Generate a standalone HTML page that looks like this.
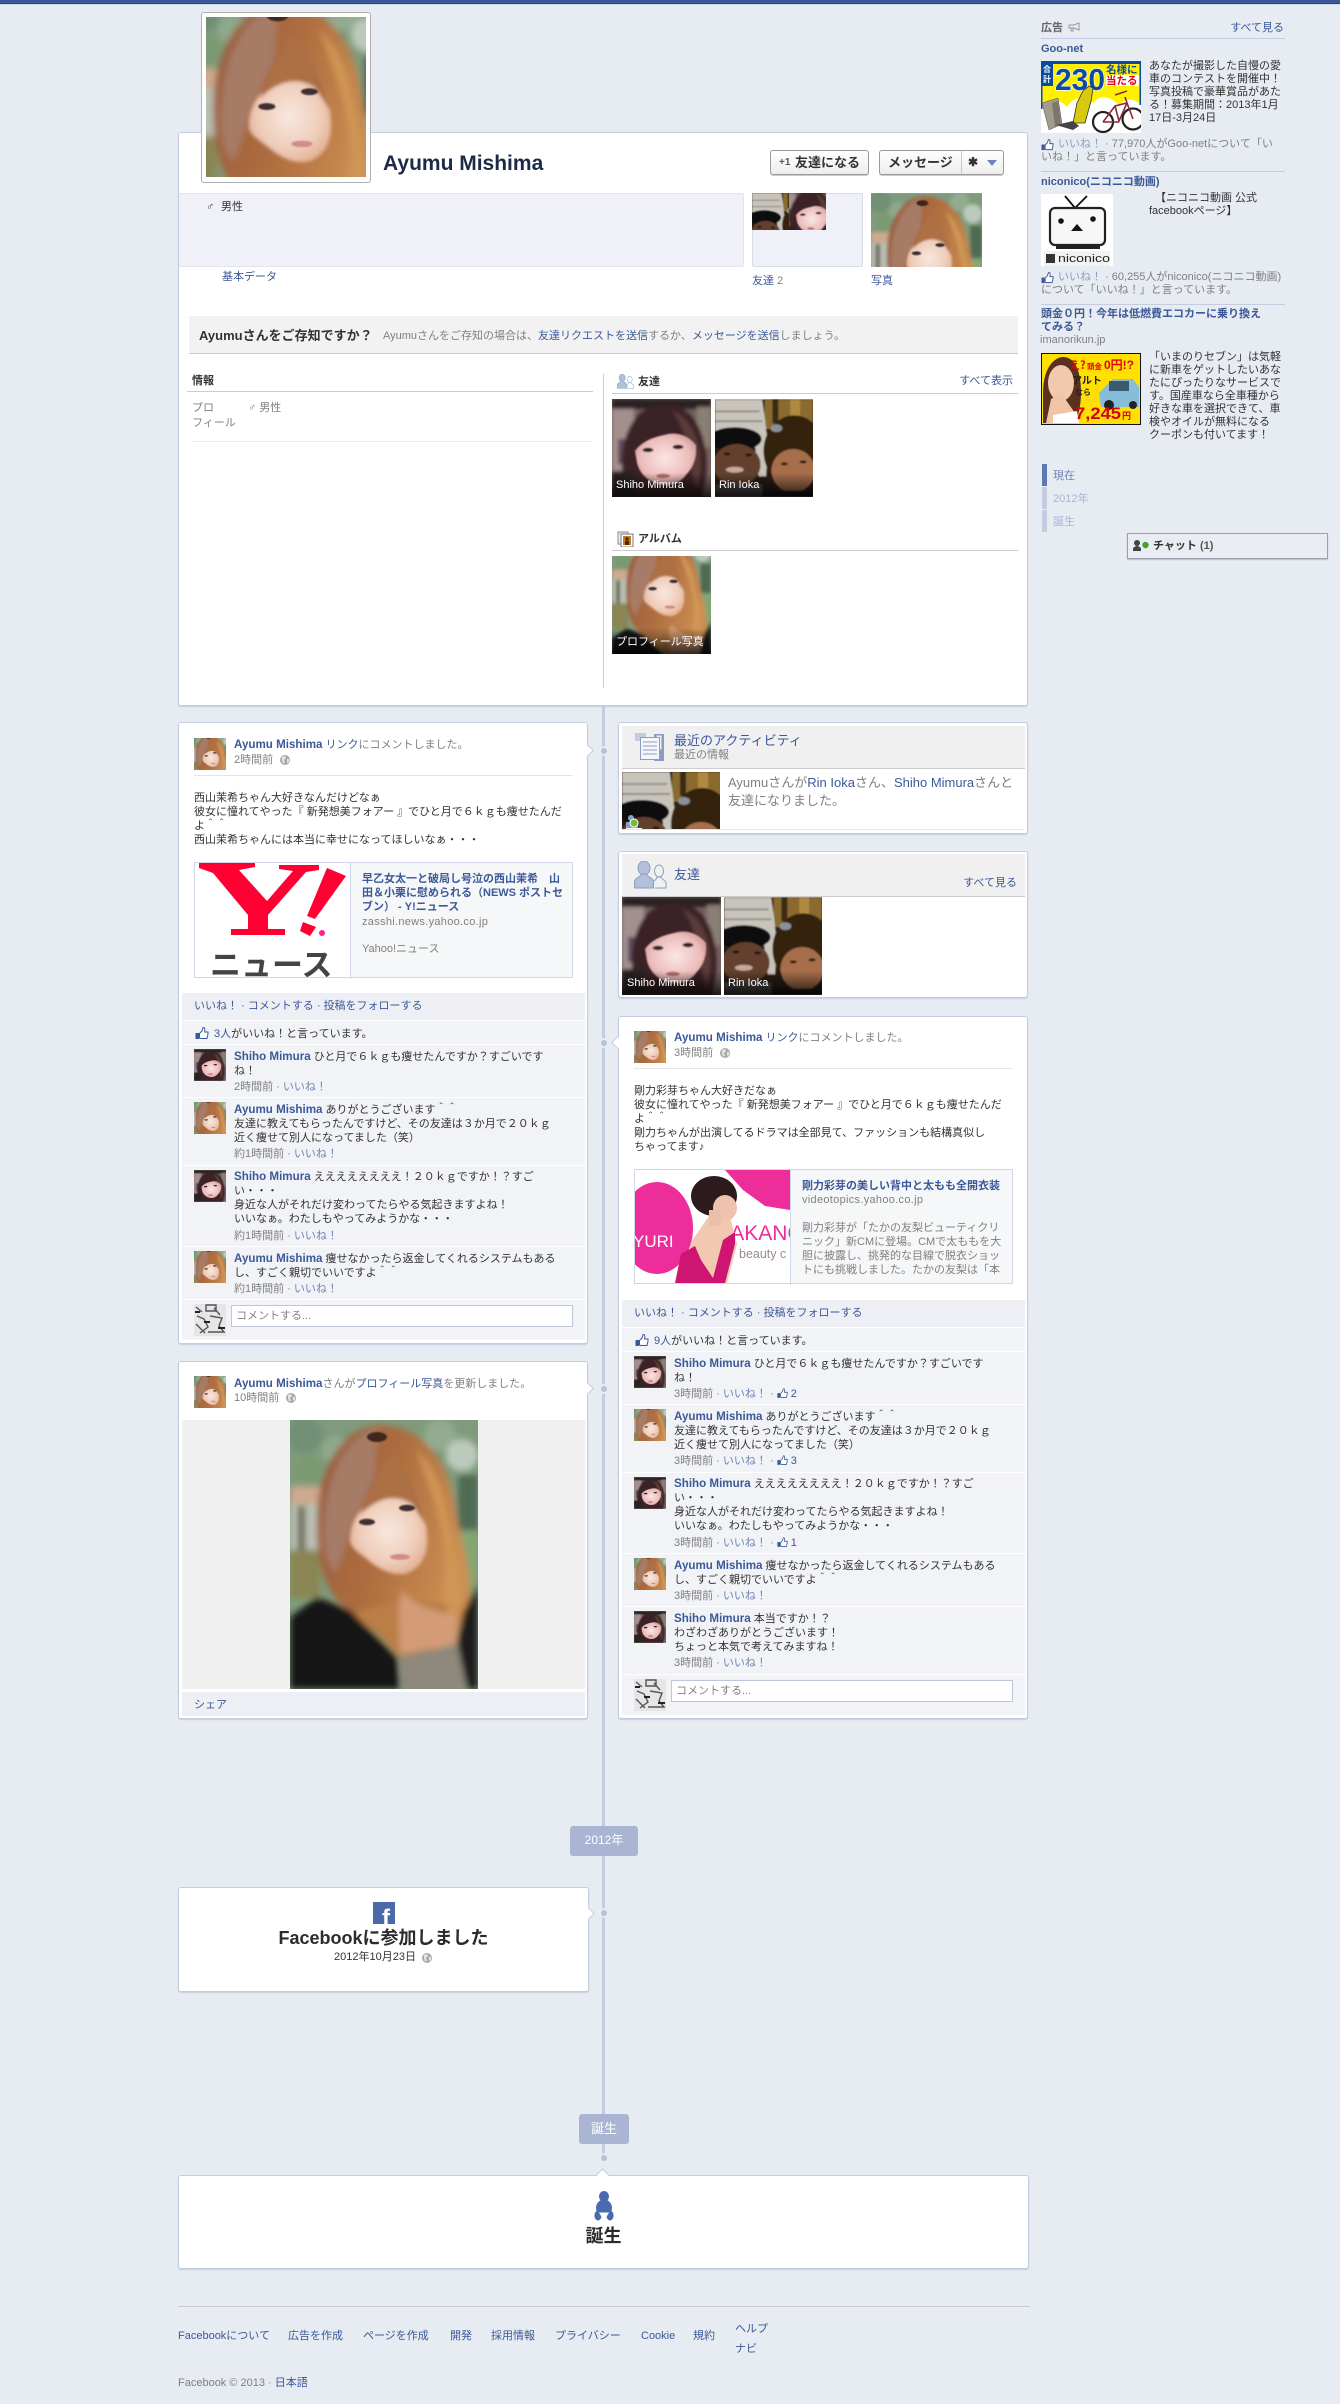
<!DOCTYPE html>
<html lang="ja"><head><meta charset="utf-8"><title>Ayumu Mishima</title>
<style>
html,body{margin:0;padding:0}
body{width:1340px;height:2404px;position:relative;overflow:hidden;background:#e7ebf2;font:11px/14px "Liberation Sans","Noto Sans CJK JP",sans-serif;color:#333}
a{color:#3b5998;text-decoration:none}
.t{position:absolute;white-space:nowrap;line-height:14px}
.g{color:#808080}
.n{font-weight:bold;font-size:11.6px;color:#3b5998}
.b{font-weight:bold}
.x{position:absolute;box-sizing:border-box}
.card{position:absolute;box-sizing:border-box;background:#fff;border:1px solid #c4cde0;border-radius:3px;box-shadow:0 1px 1px #c4cde0}
.r{position:absolute;left:182px;width:403px;background:#f1f3f7}
.rr{left:622px}
svg{position:absolute;display:block;overflow:hidden}
.av{width:32px;height:32px}
.arr{position:absolute;width:9px;height:9px;background:#fff;border:1px solid #c4cde0;transform:rotate(45deg);box-sizing:border-box}
.dot{position:absolute;left:601px;width:6px;height:6px;border-radius:3px;background:#b6c2dc;box-shadow:0 0 0 2px #e7ebf2}
.cap{position:absolute;background:linear-gradient(rgba(0,0,0,0),rgba(0,0,0,.75))}
.w{color:#fff}
.btn{position:absolute;box-sizing:border-box;height:25px;border:1px solid #9a9a9a;border-radius:3px;background:linear-gradient(#fff,#eee);box-shadow:0 1px 0 #ccc;font:bold 13px/23px "Liberation Sans","Noto Sans CJK JP",sans-serif;color:#333}
.inp{position:absolute;box-sizing:border-box;height:22px;background:#fff;border:1px solid #bdc7d8;color:#808080;padding-left:4px;line-height:20px;font-size:11px}
.hr{position:absolute;height:1px}
</style></head><body>

<svg width="0" height="0" style="position:absolute">
<defs>
<filter id="bl" x="-5%" y="-5%" width="110%" height="110%"><feGaussianBlur stdDeviation="3.2"/></filter>
<filter id="bm" x="-5%" y="-5%" width="110%" height="110%"><feGaussianBlur stdDeviation="1.8"/></filter>
<filter id="bs" x="-5%" y="-5%" width="110%" height="110%"><feGaussianBlur stdDeviation=".8"/></filter>
<linearGradient id="hg" x1="0" y1="0" x2="1" y2=".4"><stop offset="0" stop-color="#96583a"/><stop offset=".55" stop-color="#b06f40"/><stop offset="1" stop-color="#cc8e52"/></linearGradient>
<radialGradient id="fg" cx=".5" cy=".48" r=".62"><stop offset="0" stop-color="#f8e8df"/><stop offset=".6" stop-color="#efcdba"/><stop offset="1" stop-color="#dea888"/></radialGradient>
<radialGradient id="sg" cx=".5" cy=".48" r=".62"><stop offset="0" stop-color="#fae6e6"/><stop offset=".65" stop-color="#ecbdbb"/><stop offset="1" stop-color="#c58d90"/></radialGradient>
<g id="a"><rect width="188" height="269" fill="#7f9b7c"/>
<g filter="url(#bl)">
<circle cx="15" cy="15" r="18" fill="#6f9074"/><circle cx="45" cy="30" r="14" fill="#8fa98c"/><circle cx="20" cy="50" r="14" fill="#7a9a72"/>
<circle cx="150" cy="15" r="16" fill="#93ab8f"/><circle cx="172" cy="35" r="16" fill="#bccabb"/><circle cx="140" cy="40" r="10" fill="#6f8d6c"/>
<rect x="168" y="55" width="20" height="55" fill="#4f6b52"/>
<rect x="160" y="112" width="28" height="70" fill="#85a672"/>
<rect x="0" y="66" width="30" height="18" fill="#cda98e"/>
<rect x="0" y="84" width="30" height="46" fill="#b9c0b2"/>
<rect x="8" y="86" width="7" height="44" fill="#5e5c4e"/>
<rect x="0" y="130" width="30" height="48" fill="#8a8552"/>
<path d="M27 110C25 42 58 5 90 5c40 0 68 34 74 76 5 38 20 68 15 104-5 30-30 50-54 55-16-6-30-26-50-40C50 188 28 170 27 110Z" fill="url(#hg)"/>
<path d="M35 90C40 45 62 12 88 8l-4 50-22 50-16 46C32 140 32 115 35 90Z" fill="#a67c66"/>
<path d="M126 30c18 16 28 40 32 70 5 28 14 55 12 82-2 14-12 26-22 34l8-66c0-40-16-84-30-120Z" fill="#d09655"/>
<path d="M60 196c18 8 36 24 50 42l26-3c14-10 20-30 22-50-26-8-66-4-98 11Z" fill="#bb7e46"/>
<path d="M0 197 27 177 60 190 107 237 110 269H0Z" fill="#151515"/>
<path d="M188 163V269H177L167 223 173 193Z" fill="#1a1a1a"/>
<path d="M113 170c8 14 26 20 54 26v28l-57 10c0-25-4-50 3-64Z" fill="#d39c76"/>
<path d="M110 236 167 225 177 269H112Z" fill="#8f887c"/>
</g>
<g filter="url(#bm)">
<path d="M60 120C60 100 72 82 97 72c21-4 33 4 39 33 4 25-1 40-18 48-14 4-28-3-40-13C68 132 60 128 60 120Z" fill="url(#fg)"/>
<path d="M70 95C80 70 92 50 100 35c16 15 28 40 36 70L122 84C104 72 84 80 70 95Z" fill="#ac7045"/>
</g>
<g filter="url(#bs)">
<ellipse cx="87" cy="17" rx="10" ry="5" fill="#40281f"/>
<ellipse cx="77" cy="102" rx="8" ry="3.2" fill="#3f2f30"/>
<ellipse cx="117" cy="88" rx="8" ry="3.2" fill="#3f2f30"/>
<ellipse cx="110" cy="137" rx="10" ry="3" fill="#d08c8c"/>
</g></g>
<g id="s"><rect width="99" height="98" fill="#74625f"/>
<g filter="url(#bm)">
<rect width="99" height="10" fill="#2a2322"/>
<rect x="0" y="10" width="22" height="62" fill="#a3908e"/>
<rect x="6" y="40" width="10" height="25" fill="#5d4a58"/>
<rect x="85" y="8" width="14" height="40" fill="#8a7f74"/>
<path d="M12 90C5 50 15 8 50 6c30-2 42 25 44 50 2 20-2 30-4 42H20Z" fill="#3a2228"/>
<path d="M60 12c15 4 24 20 28 40 2 16 0 28-3 40L76 60C74 40 70 24 60 12Z" fill="#5a3a38"/>
<rect x="0" y="72" width="22" height="26" fill="#2a2323"/>
</g>
<g filter="url(#bs)">
<path d="M23 52C30 42 42 38 52 36c12-4 24 0 32 10 1 12-2 22-10 30-6 8-14 11-24 10-12-2-22-10-25-22Z" fill="url(#sg)"/>
<ellipse cx="36" cy="51" rx="5.500" ry="2.200" fill="#332428"/>
<ellipse cx="66" cy="48" rx="5.500" ry="2.200" fill="#332428"/>
<ellipse cx="51" cy="77" rx="7" ry="2.200" fill="#b56a6a"/>
</g></g>
<g id="r"><rect width="99" height="98" fill="#2a1c14"/>
<g filter="url(#bs)">
<rect x="50" width="49" height="30" fill="#8a6a2e"/>
<rect x="58" width="6" height="24" fill="#3a2a18"/>
<rect x="76" width="10" height="26" fill="#b08a40"/>
<path d="M0 0H48L53 40 52 78H44L40 45H0Z" fill="#c8c4bc"/>
<path d="M0 12H45M0 22H48" stroke="#95918a" stroke-width="2"/>
<ellipse cx="20" cy="40" rx="27" ry="12" fill="#0e0c0e"/>
<ellipse cx="22" cy="66" rx="24" ry="21" fill="#64402f"/>
<ellipse cx="12" cy="55" rx="3.500" ry="1.500" fill="#1a1210"/><ellipse cx="34" cy="56" rx="3.500" ry="1.500" fill="#1a1210"/>
<ellipse cx="20" cy="71" rx="9" ry="3" fill="#c8a69a"/>
<ellipse cx="80" cy="52" rx="31" ry="36" fill="#36210f"/>
<ellipse cx="79" cy="72" rx="22" ry="22" fill="#a66e4c"/>
<ellipse cx="70" cy="65" rx="3.500" ry="1.500" fill="#2a1a10"/><ellipse cx="89" cy="63" rx="3.500" ry="1.500" fill="#2a1a10"/>
<ellipse cx="62" cy="29" rx="6" ry="4" fill="#8a9098"/>
<rect x="0" y="86" width="48" height="12" fill="#4e4a46"/>
<rect x="48" y="92" width="51" height="6" fill="#1b1512"/>
</g></g>
<g id="th"><rect x=".5" y="6" width="3.5" height="6" fill="#3b5998"/><path d="M4.5 6.5 7 4 8 .7c1.5-.6 2.2.6 1.6 4.3H13V7l-1 4.5H6L4.5 11Z" fill="#fff" stroke="#3b5998" stroke-width="1"/></g>
<g id="gl"><circle cx="5" cy="5" r="5" fill="#a9a9a9"/><path d="M2 2 5 1 6 3 4 5 5 8 3 8.500 2 5ZM7 4 9 4 9 7 7 8Z" fill="#e4e4e4"/></g>
<g id="fr"><ellipse cx="10" cy="7" rx="6" ry="7" fill="#b3c0dc" stroke="#8b9dc3"/><path d="M.5 27V21c0-4 6-5 7-8h5c1 3 7 4 7 8v6Z" fill="#b3c0dc" stroke="#8b9dc3"/><ellipse cx="25" cy="10" rx="4.500" ry="6" fill="none" stroke="#8b9dc3"/><path d="M21 27h11V22c0-3-4-3-5-6h-4c0 2-2 3-3 4" fill="none" stroke="#8b9dc3"/></g>
</defs></svg>

<!-- top bar -->
<div class="x" style="left:0;top:0;width:1340px;height:3px;background:#3b5998"></div>
<div class="x" style="left:0;top:3px;width:1340px;height:1px;background:#2c4587"></div>
<div class="x" style="left:0;top:4px;width:1340px;height:1px;background:#cfd6e4"></div>

<!-- timeline -->
<div class="x" style="left:602px;top:706px;width:3px;height:1448px;background:#c4cde0"></div>

<!-- header card -->
<div class="card" style="left:178px;top:132px;width:850px;height:574px"></div>
<div class="x" style="left:201px;top:12px;width:170px;height:171px;background:#fff;border:1px solid #b0b0b0;border-radius:3px"></div>
<svg style="left:206px;top:17px" width="160" height="160" viewBox="20 18 150 150"><use href="#a"/></svg>
<div class="t" style="left:383px;top:151px;font:bold 21px/26px 'Liberation Sans',sans-serif;color:#1c2a47">Ayumu Mishima</div>

<div class="btn" style="left:770px;top:150px;width:99px"><span style="position:absolute;left:8px;top:0;font-size:10px;color:#555">+1</span><span style="position:absolute;left:24px;white-space:nowrap">友達になる</span></div>
<div class="btn" style="left:879px;top:150px;width:125px"><span style="position:absolute;left:8px;white-space:nowrap">メッセージ</span><span style="position:absolute;left:81px;top:0;width:1px;height:23px;background:#c8c8c8"></span><span style="position:absolute;left:88px;top:0;font-size:12px">✱</span><span style="position:absolute;left:107px;top:9px;border:5px solid transparent;border-top:6px solid #6d84b4;border-bottom:0"></span></div>

<div class="x" style="left:179px;top:193px;width:565px;height:74px;background:#f0f1f8;border:1px solid #e3e6f0;border-left:0;border-radius:0 2px 2px 0"></div>
<div class="t" style="left:206px;top:200px">♂</div><div class="t" style="left:221px;top:200px">男性</div>
<div class="t" style="left:222px;top:270px"><a>基本データ</a></div>
<div class="x" style="left:752px;top:193px;width:111px;height:74px;background:#f0f1f8;border:1px solid #d8dce8;border-radius:2px"></div>
<svg style="left:752px;top:193px" width="37" height="37" viewBox="0 0 60 60"><use href="#r"/></svg>
<svg style="left:789px;top:193px" width="37" height="37" viewBox="10 10 70 70"><use href="#s"/></svg>
<svg style="left:871px;top:193px" width="111" height="74" viewBox="0 0 188 125"><use href="#a"/></svg>
<div class="t" style="left:752px;top:274px"><a>友達</a> <span class="g">2</span></div>
<div class="t" style="left:871px;top:274px"><a>写真</a></div>

<div class="x" style="left:189px;top:316px;width:829px;height:38px;background:#f2f2f2;border-bottom:1px solid #ccc"></div>
<div class="t b" style="left:199px;top:329px;font-size:13px">Ayumuさんをご存知ですか？</div>
<div class="t g" style="left:383px;top:329px">Ayumuさんをご存知の場合は、<a>友達リクエストを送信</a>するか、<a>メッセージを送信</a>しましょう。</div>

<div class="t b" style="left:192px;top:374px">情報</div>
<div class="hr" style="left:187px;top:391px;width:406px;background:#ccc"></div>
<div class="t g" style="left:192px;top:401px;line-height:15px">プロ<br>フィール</div>
<div class="t g" style="left:248px;top:401px">♂ 男性</div>
<div class="hr" style="left:192px;top:441px;width:401px;background:#eee"></div>
<div class="x" style="left:603px;top:374px;width:1px;height:314px;background:#ccc"></div>

<svg style="left:617px;top:374px" width="17" height="15" viewBox="0 0 33 28"><use href="#fr"/></svg>
<div class="t b" style="left:638px;top:375px">友達</div>
<div class="t" style="right:327px;top:374px"><a>すべて表示</a></div>
<div class="hr" style="left:612px;top:393px;width:406px;background:#ccc"></div>
<svg style="left:612px;top:399px" width="99" height="98" viewBox="0 0 99 98"><use href="#s"/></svg>
<div class="cap" style="left:612px;top:473px;width:99px;height:24px"></div>
<div class="t w" style="left:616px;top:478px">Shiho Mimura</div>
<svg style="left:715px;top:399px" width="98" height="98" viewBox="0 0 99 98"><use href="#r"/></svg>
<div class="cap" style="left:715px;top:473px;width:98px;height:24px"></div>
<div class="t w" style="left:719px;top:478px">Rin Ioka</div>

<svg style="left:617px;top:531px" width="17" height="16" viewBox="0 0 17 16"><rect x="1" y="1" width="10" height="12" fill="#eee" stroke="#888"/><rect x="4" y="3" width="12" height="13" fill="#fff" stroke="#777"/><rect x="6" y="5" width="8" height="9" fill="#c77a1e"/><circle cx="10" cy="8" r="1.800" fill="#4a2a0a"/><rect x="8" y="10" width="4" height="4" fill="#4a2a0a"/></svg>
<div class="t b" style="left:638px;top:532px">アルバム</div>
<div class="hr" style="left:612px;top:550px;width:406px;background:#ccc"></div>
<svg style="left:612px;top:556px" width="99" height="98" viewBox="0 40 188 186"><use href="#a"/></svg>
<div class="cap" style="left:612px;top:628px;width:99px;height:26px"></div>
<div class="t w" style="left:616px;top:635px">プロフィール写真</div>

<!-- ads -->
<div class="t b g" style="left:1041px;top:21px;color:#666">広告</div>
<svg style="left:1068px;top:22px" width="12" height="10" viewBox="0 0 12 10"><path d="M1 3H6L11 1V8L6 6H1ZM3 6V9H5V6" fill="none" stroke="#999"/></svg>
<div class="t" style="right:56px;top:21px"><a>すべて見る</a></div>
<div class="hr" style="left:1041px;top:38px;width:244px;background:#c4cde0"></div>
<div class="t b" style="left:1041px;top:42px"><a>Goo-net</a></div>

<svg style="left:1041px;top:61px" width="100" height="72" viewBox="0 0 100 72">
<rect width="100" height="72" fill="#fff"/><path d="M0 0H100V44C92 36 84 38 78 44 70 36 60 32 52 42 42 34 32 36 26 46 18 36 8 42 0 46Z" fill="#fff000"/>
<rect width="100" height="3" fill="#0b4a9e"/><rect width="1.500" height="48" fill="#0b4a9e"/><rect x="98.500" width="1.500" height="44" fill="#0b4a9e"/><rect width="12" height="25" fill="#0b4a9e"/>
<text x="2" y="11" font-size="8" font-weight="bold" fill="#fff" font-family="Noto Sans CJK JP,sans-serif">合</text><text x="2" y="21" font-size="8" font-weight="bold" fill="#fff" font-family="Noto Sans CJK JP,sans-serif">計</text>
<text x="14" y="29" font-size="31" font-weight="bold" fill="#0b4a9e" stroke="#fff" stroke-width="1.200" paint-order="stroke" font-family="Liberation Sans,sans-serif" textLength="50" lengthAdjust="spacingAndGlyphs">230</text>
<text x="65" y="12" font-size="10.500" font-weight="bold" fill="#0b4a9e" font-family="Noto Sans CJK JP,sans-serif">名様に</text>
<rect x="65" y="14" width="33" height="11" fill="#fff"/><text x="65" y="23" font-size="10.500" font-weight="bold" fill="#e60012" font-family="Noto Sans CJK JP,sans-serif">当たる</text>
<path d="M1 42 17 37 21 63 8 69Z" fill="#a39c8c" stroke="#555" stroke-width=".5"/><path d="M11 42 17 40 20 62 14 66Z" fill="#7d776a"/>
<path d="M42 30 48 25 52 27 50 40 44 62H32L36 42Z" fill="#d8c810" stroke="#333" stroke-width=".8"/><path d="M15 64 32 60 38 65 32 69Z" fill="#444"/>
<g fill="none" stroke="#222" stroke-width="2.200"><circle cx="62" cy="61" r="10"/><circle cx="92" cy="58" r="10.500"/></g><path d="M62 61 74 45 86 42 92 58M74 45 78 60 86 42M62 61H78M84 36 86 42M74 34 86 30" fill="none" stroke="#8a2a3a" stroke-width="1.600"/></svg>

<div class="t" style="left:1149px;top:60px;line-height:13px">あなたが撮影した自慢の愛<br>車のコンテストを開催中！<br>写真投稿で豪華賞品があた<br>る！募集期間：2013年1月<br>17日-3月24日</div>
<svg style="left:1041px;top:139px" width="13" height="12" viewBox="0 0 14 13"><use href="#th"/></svg>
<div class="t g" style="left:1058px;top:138px;line-height:13px"><a style="color:#8b9dc3">いいね！</a> · 77,970人がGoo-netについて「い</div>
<div class="t g" style="left:1041px;top:151px;line-height:13px">いね！」と言っています。</div>
<div class="hr" style="left:1041px;top:171px;width:244px;background:#c4cde0"></div>
<div class="t b" style="left:1041px;top:175px"><a>niconico(ニコニコ動画)</a></div>

<svg style="left:1041px;top:194px" width="72" height="72" viewBox="0 0 72 72"><rect width="72" height="72" fill="#fff"/><path d="M24 2 34 14 46 2" fill="none" stroke="#111" stroke-width="1.800"/><rect x="9" y="14" width="55" height="37" rx="5" fill="#f7f7f7" stroke="#222" stroke-width="2.200"/><circle cx="20" cy="27" r="2.800" fill="#111"/><circle cx="52" cy="25" r="2.800" fill="#111"/><path d="M30 37 36 30 42 37Z" fill="#111"/><path d="M15 52h44v3H15z" fill="#222"/><rect x="3" y="57" width="66" height="15" fill="#f2f2f2"/><text x="17" y="68" font-size="11" font-family="Liberation Sans,sans-serif" fill="#222" textLength="52" lengthAdjust="spacingAndGlyphs">niconico</text><rect x="5" y="60" width="9" height="9" fill="#333"/></svg>

<div class="t" style="left:1155px;top:192px;line-height:13px">【ニコニコ動画 公式</div>
<div class="t" style="left:1149px;top:205px;line-height:13px">facebookページ】</div>
<svg style="left:1041px;top:272px" width="13" height="12" viewBox="0 0 14 13"><use href="#th"/></svg>
<div class="t g" style="left:1058px;top:271px;line-height:13px"><a style="color:#8b9dc3">いいね！</a> · 60,255人がniconico(ニコニコ動画)</div>
<div class="t g" style="left:1041px;top:284px;line-height:13px">について「いいね！」と言っています。</div>
<div class="hr" style="left:1041px;top:304px;width:244px;background:#c4cde0"></div>
<div class="t b" style="left:1041px;top:308px;line-height:13px"><a>頭金０円！今年は低燃費エコカーに乗り換え<br>てみる？</a></div>
<div class="t g" style="left:1040px;top:334px;line-height:13px">imanorikun.jp</div>

<svg style="left:1041px;top:353px" width="100" height="72" viewBox="0 0 100 72"><rect width="100" height="72" fill="#ffe000"/><rect x=".5" y=".5" width="99" height="71" fill="none" stroke="#111"/><path d="M2 70V40C2 14 14 4 22 4c12 0 18 14 18 36 0 14-4 30-8 30Z" fill="#5a3020"/><ellipse cx="20" cy="30" rx="13" ry="18" fill="#f2c9ac"/><path d="M5 70 10 46 20 40 34 60 36 70Z" fill="#f0c4a4"/><path d="M12 62 36 58 38 70H12Z" fill="#fff"/><path d="M58 40 72 26H92L98 34V54H60Z" fill="#86bdd8"/><rect x="68" y="28" width="20" height="10" fill="#3b5a70"/><circle cx="68" cy="52" r="5" fill="#222"/><circle cx="92" cy="52" r="4" fill="#222"/><text x="28" y="16" font-size="11" font-weight="bold" fill="#e60012" font-family="Noto Sans CJK JP,sans-serif">え?</text><text x="46" y="16" font-size="7.500" font-weight="bold" fill="#e60012" font-family="Noto Sans CJK JP,sans-serif">頭金</text><text x="63" y="16" font-size="12" font-weight="bold" fill="#e60012" font-family="Liberation Sans,sans-serif">0円!?</text><text x="31" y="31" font-size="10" font-weight="bold" fill="#222" font-family="Noto Sans CJK JP,sans-serif">アルト</text><text x="34" y="42" font-size="8" font-weight="bold" fill="#222" font-family="Noto Sans CJK JP,sans-serif">なら</text><text x="34" y="66" font-size="17" font-weight="bold" fill="#d6001c" font-family="Liberation Sans,sans-serif" textLength="46" lengthAdjust="spacingAndGlyphs">7,245</text><text x="81" y="66" font-size="9" font-weight="bold" fill="#d6001c" font-family="Noto Sans CJK JP,sans-serif">円</text></svg>

<div class="t" style="left:1149px;top:351px;line-height:13px">「いまのりセブン」は気軽<br>に新車をゲットしたいあな<br>たにぴったりなサービスで<br>す。国産車なら全車種から<br>好きな車を選択できて、車<br>検やオイルが無料になる<br>クーポンも付いてます！</div>

<!-- year nav -->
<div class="x" style="left:1042px;top:464px;width:5px;height:22px;background:#5f78b3"></div>
<div class="x" style="left:1042px;top:487px;width:5px;height:22px;background:#c4cde0"></div>
<div class="x" style="left:1042px;top:510px;width:5px;height:22px;background:#c4cde0"></div>
<div class="t" style="left:1053px;top:469px;color:#6d84b4">現在</div>
<div class="t" style="left:1053px;top:492px;color:#a9b5d3">2012年</div>
<div class="t" style="left:1053px;top:515px;color:#a9b5d3">誕生</div>

<!-- chat -->
<div class="x" style="left:1127px;top:533px;width:201px;height:26px;background:#e9ecf3;border:1px solid #9aa0ac;box-shadow:0 1px 1px #bbb"></div>
<svg style="left:1133px;top:540px" width="18" height="12" viewBox="0 0 18 12"><circle cx="4" cy="3" r="3" fill="#444"/><path d="M0 11V9C0 7 2 7 3 6H5C6 7 8 7 8 9V11Z" fill="#444"/><circle cx="12.500" cy="5" r="3.200" fill="#42a52c"/></svg>
<div class="t b" style="left:1153px;top:539px">チャット <span style="color:#555;font-weight:bold">(1)</span></div>

<!-- LEFT POST 1 -->
<div class="card" style="left:178px;top:722px;width:410px;height:622px"></div>
<div class="arr" style="left:583px;top:746px;border-left:0;border-bottom:0"></div>
<div class="dot" style="top:748px"></div>
<svg class="av" style="left:194px;top:738px" viewBox="20 18 150 150"><use href="#a"/></svg>
<div class="t" style="left:234px;top:738px"><span class="n">Ayumu Mishima</span> <a>リンク</a><span class="g">にコメントしました。</span></div>
<div class="t g" style="left:234px;top:753px">2時間前</div>
<svg style="left:280px;top:755px" width="10" height="10"><use href="#gl"/></svg>
<div class="hr" style="left:194px;top:775px;width:379px;background:#e5e5e5"></div>
<div class="t" style="left:194px;top:791px">西山茉希ちゃん大好きなんだけどなぁ<br>彼女に憧れてやった『 新発想美フォアー 』でひと月で６ｋｇも痩せたんだ<br>よ＾＾<br>西山茉希ちゃんには本当に幸せになってほしいなぁ・・・</div>

<div class="x" style="left:194px;top:862px;width:379px;height:116px;background:#f6f7f9;border:1px solid #d0d8e8"></div>
<svg style="left:195px;top:863px;background:#fff" width="155" height="114" viewBox="0 0 155 114"><g fill="#ff0033"><path d="M4 0H60V4L44 7 72 38 98 8 84 6V2H124V7L111 9 73 52V66H90V72H36V66H53V52L18 10 4 5Z"/><path d="M132 5 151 13 120 56 112 53Z"/><path d="M108 59 121 64 115 73 105 68Z"/></g><circle cx="127" cy="70" r="3" fill="#f28"/><text x="15" y="113" font-size="31" font-weight="bold" fill="#444" font-family="Noto Sans CJK JP,sans-serif">ニュース</text></svg>
<div class="x" style="left:350px;top:863px;width:1px;height:116px;background:#d0d8e8"></div>
<div class="t b" style="left:362px;top:872px"><a>早乙女太一と破局し号泣の西山茉希　山<br>田＆小栗に慰められる（NEWS ポストセ<br>ブン） - Y!ニュース</a></div>
<div class="t g" style="left:362px;top:915px;letter-spacing:.3px">zasshi.news.yahoo.co.jp</div>
<div class="t g" style="left:362px;top:942px">Yahoo!ニュース</div>

<div class="r" style="top:993px;height:27px;background:#edeff4"></div>
<div class="t" style="left:194px;top:999px"><a>いいね！ · コメントする · 投稿をフォローする</a></div>
<div class="r" style="top:1021px;height:23px"></div>
<svg style="left:195px;top:1027px" width="14" height="13"><use href="#th"/></svg>
<div class="t" style="left:214px;top:1027px"><a>3人</a>がいいね！と言っています。</div>

<div class="r" style="top:1045px;height:52px"></div>
<svg class="av" style="left:194px;top:1049px" viewBox="0 0 99 98"><use href="#s"/></svg>
<div class="t" style="left:234px;top:1050px"><span class="n">Shiho Mimura</span> ひと月で６ｋｇも痩せたんですか？すごいです<br>ね！</div>
<div class="t g" style="left:234px;top:1080px">2時間前 · <a style="color:#6d84b4">いいね！</a></div>

<div class="r" style="top:1098px;height:67px"></div>
<svg class="av" style="left:194px;top:1102px" viewBox="20 18 150 150"><use href="#a"/></svg>
<div class="t" style="left:234px;top:1103px"><span class="n">Ayumu Mishima</span> ありがとうございます＾＾<br>友達に教えてもらったんですけど、その友達は３か月で２０ｋｇ<br>近く痩せて別人になってました（笑）</div>
<div class="t g" style="left:234px;top:1147px">約1時間前 · <a style="color:#6d84b4">いいね！</a></div>

<div class="r" style="top:1166px;height:80px"></div>
<svg class="av" style="left:194px;top:1170px" viewBox="0 0 99 98"><use href="#s"/></svg>
<div class="t" style="left:234px;top:1170px"><span class="n">Shiho Mimura</span> ええええええええ！２０ｋｇですか！？すご<br>い・・・<br>身近な人がそれだけ変わってたらやる気起きますよね！<br>いいなぁ。わたしもやってみようかな・・・</div>
<div class="t g" style="left:234px;top:1229px">約1時間前 · <a style="color:#6d84b4">いいね！</a></div>

<div class="r" style="top:1247px;height:52px"></div>
<svg class="av" style="left:194px;top:1251px" viewBox="20 18 150 150"><use href="#a"/></svg>
<div class="t" style="left:234px;top:1252px"><span class="n">Ayumu Mishima</span> 痩せなかったら返金してくれるシステムもある<br>し、すごく親切でいいですよ＾＾</div>
<div class="t g" style="left:234px;top:1282px">約1時間前 · <a style="color:#6d84b4">いいね！</a></div>

<div class="r" style="top:1300px;height:40px"></div>
<svg class="av" style="left:194px;top:1304px" viewBox="0 0 32 32"><rect width="32" height="32" fill="#e6e6e6"/><path d="M2 3l6 5M12 1h10v6H12zM3 12l7 3 4 8-8 6M16 12l12 2-3 8 5 6H14M20 4l6 7M2 20l9 9" stroke="#555" fill="none" stroke-width="1.400"/><path d="M1 8h5M24 24h7M10 18h6" stroke="#222" stroke-width="2"/></svg>
<div class="inp" style="left:231px;top:1305px;width:342px">コメントする...</div>

<!-- LEFT POST 2 -->
<div class="card" style="left:178px;top:1361px;width:410px;height:358px"></div>
<div class="arr" style="left:583px;top:1384px;border-left:0;border-bottom:0"></div>
<div class="dot" style="top:1386px"></div>
<svg class="av" style="left:194px;top:1376px" viewBox="20 18 150 150"><use href="#a"/></svg>
<div class="t" style="left:234px;top:1377px"><span class="n">Ayumu Mishima</span><span class="g">さんが</span><a>プロフィール写真</a><span class="g">を更新しました。</span></div>
<div class="t g" style="left:234px;top:1391px">10時間前</div>
<svg style="left:286px;top:1393px" width="10" height="10"><use href="#gl"/></svg>
<div class="r" style="top:1420px;height:269px;background:#f0f0f0"></div>
<svg style="left:290px;top:1420px" width="188" height="269" viewBox="0 0 188 269"><use href="#a"/></svg>
<div class="r" style="top:1692px;height:24px;background:#edeff4"></div>
<div class="t" style="left:194px;top:1698px"><a>シェア</a></div>

<!-- RIGHT activity -->
<div class="card" style="left:618px;top:722px;width:410px;height:112px"></div>
<div class="x" style="left:622px;top:726px;width:403px;height:43px;background:#f0f0f0;border-bottom:1px solid #ccc"></div>
<svg style="left:635px;top:733px" width="29" height="28" viewBox="0 0 29 28"><rect width="11" height="8" fill="#c4cde0"/><rect x="19" y="1" width="10" height="27" fill="#8b9dc3"/><rect x="21" y="2" width="6" height="15" fill="#eef0f6" stroke="#8b9dc3"/><rect x="5.500" y="4.500" width="19" height="22" fill="#f4f6fa" stroke="#8b9dc3"/><path d="M8 9h14M8 13h14M8 17h14M8 21h14" stroke="#8b9dc3"/></svg>
<div class="t" style="left:674px;top:733px;font-size:13px;line-height:16px"><a>最近のアクティビティ</a></div>
<div class="t g" style="left:674px;top:748px">最近の情報</div>
<svg style="left:622px;top:772px" width="98" height="58" viewBox="0 0 98 58"><use href="#r"/><circle cx="9" cy="46" r="3" fill="#8b9dc3"/><rect x="4" y="50" width="12" height="6" fill="#8b9dc3"/><circle cx="12" cy="51" r="4" fill="#6fbf3a" stroke="#fff"/><rect x="4" y="56" width="16" height="1" fill="#fff"/></svg>
<div class="t g" style="left:728px;top:774px;font-size:13px;line-height:18px">Ayumuさんが<a>Rin Ioka</a>さん、<a>Shiho Mimura</a>さんと<br>友達になりました。</div>
<div class="hr" style="left:622px;top:829px;width:403px;background:#e5e5e5"></div>

<!-- RIGHT friends -->
<div class="card" style="left:618px;top:851px;width:410px;height:147px"></div>
<div class="x" style="left:622px;top:854px;width:403px;height:43px;background:#f0f0f0;border-bottom:1px solid #ccc"></div>
<svg style="left:634px;top:861px" width="33" height="28" viewBox="0 0 33 28"><use href="#fr"/></svg>
<div class="t" style="left:674px;top:867px;font-size:13px;line-height:16px"><a>友達</a></div>
<div class="t" style="right:323px;top:876px"><a>すべて見る</a></div>
<svg style="left:622px;top:897px" width="99" height="98" viewBox="0 0 99 98"><use href="#s"/></svg>
<div class="cap" style="left:622px;top:971px;width:99px;height:24px"></div>
<div class="t w" style="left:627px;top:976px">Shiho Mimura</div>
<svg style="left:724px;top:897px" width="98" height="98" viewBox="0 0 99 98"><use href="#r"/></svg>
<div class="cap" style="left:724px;top:971px;width:98px;height:24px"></div>
<div class="t w" style="left:728px;top:976px">Rin Ioka</div>

<!-- RIGHT POST -->
<div class="card" style="left:618px;top:1016px;width:410px;height:703px"></div>
<div class="arr" style="left:613px;top:1038px;border-right:0;border-top:0"></div>
<div class="dot" style="top:1040px"></div>
<svg class="av" style="left:634px;top:1031px" viewBox="20 18 150 150"><use href="#a"/></svg>
<div class="t" style="left:674px;top:1031px"><span class="n">Ayumu Mishima</span> <a>リンク</a><span class="g">にコメントしました。</span></div>
<div class="t g" style="left:674px;top:1046px">3時間前</div>
<svg style="left:720px;top:1048px" width="10" height="10"><use href="#gl"/></svg>
<div class="hr" style="left:634px;top:1068px;width:379px;background:#e5e5e5"></div>
<div class="t" style="left:634px;top:1084px">剛力彩芽ちゃん大好きだなぁ<br>彼女に憧れてやった『 新発想美フォアー 』でひと月で６ｋｇも痩せたんだ<br>よ＾＾<br>剛力ちゃんが出演してるドラマは全部見て、ファッションも結構真似し<br>ちゃってます♪</div>

<div class="x" style="left:634px;top:1169px;width:379px;height:115px;background:#f6f7f9;border:1px solid #d0d8e8"></div>
<svg style="left:635px;top:1170px;background:#fff" width="155" height="113" viewBox="0 0 155 113"><ellipse cx="22" cy="58" rx="36" ry="46" fill="#ec2d9a"/><path d="M90 0H155V40L130 36 108 20Z" fill="#ec2d9a"/><text x="-2" y="77" font-size="17" fill="#fff" font-family="Liberation Sans,sans-serif">YURI</text><text x="84" y="70" font-size="21" fill="#ec2d9a" font-family="Liberation Sans,sans-serif">TAKANO</text><text x="104" y="88" font-size="12.500" fill="#9a8a90" font-family="Liberation Sans,sans-serif">beauty c</text><path d="M50 113 56 72 74 46 96 50 102 74 92 113Z" fill="#f2c8b0"/><path d="M40 113 46 84 60 76 66 90 78 108 88 70 100 62 100 74 90 113Z" fill="#cf1572"/><ellipse cx="79" cy="26" rx="23" ry="20" fill="#2c1a1c"/><ellipse cx="90" cy="38" rx="12" ry="13" fill="#eec2ae"/><rect x="74" y="40" width="12" height="16" fill="#ecc0a8"/></svg>
<div class="x" style="left:790px;top:1170px;width:1px;height:115px;background:#d0d8e8"></div>
<div class="t b" style="left:802px;top:1179px"><a>剛力彩芽の美しい背中と太もも全開衣装</a></div>
<div class="t g" style="left:802px;top:1193px;letter-spacing:.3px">videotopics.yahoo.co.jp</div>
<div class="t g" style="left:802px;top:1221px">剛力彩芽が「たかの友梨ビューティクリ<br>ニック」新CMに登場。CMで太ももを大<br>胆に披露し、挑発的な目線で脱衣ショッ<br>トにも挑戦しました。たかの友梨は「本</div>

<div class="r rr" style="top:1300px;height:27px;background:#edeff4"></div>
<div class="t" style="left:634px;top:1306px"><a>いいね！ · コメントする · 投稿をフォローする</a></div>
<div class="r rr" style="top:1328px;height:23px"></div>
<svg style="left:635px;top:1334px" width="14" height="13"><use href="#th"/></svg>
<div class="t" style="left:654px;top:1334px"><a>9人</a>がいいね！と言っています。</div>

<div class="r rr" style="top:1352px;height:52px"></div>
<svg class="av" style="left:634px;top:1356px" viewBox="0 0 99 98"><use href="#s"/></svg>
<div class="t" style="left:674px;top:1357px"><span class="n">Shiho Mimura</span> ひと月で６ｋｇも痩せたんですか？すごいです<br>ね！</div>
<div class="t g" style="left:674px;top:1387px">3時間前 · <a style="color:#6d84b4">いいね！</a> · <svg style="position:static;display:inline;vertical-align:-2px" width="11" height="11" viewBox="0 0 14 13"><use href="#th"/></svg> <a>2</a></div>

<div class="r rr" style="top:1405px;height:67px"></div>
<svg class="av" style="left:634px;top:1409px" viewBox="20 18 150 150"><use href="#a"/></svg>
<div class="t" style="left:674px;top:1410px"><span class="n">Ayumu Mishima</span> ありがとうございます＾＾<br>友達に教えてもらったんですけど、その友達は３か月で２０ｋｇ<br>近く痩せて別人になってました（笑）</div>
<div class="t g" style="left:674px;top:1454px">3時間前 · <a style="color:#6d84b4">いいね！</a> · <svg style="position:static;display:inline;vertical-align:-2px" width="11" height="11" viewBox="0 0 14 13"><use href="#th"/></svg> <a>3</a></div>

<div class="r rr" style="top:1473px;height:80px"></div>
<svg class="av" style="left:634px;top:1477px" viewBox="0 0 99 98"><use href="#s"/></svg>
<div class="t" style="left:674px;top:1477px"><span class="n">Shiho Mimura</span> ええええええええ！２０ｋｇですか！？すご<br>い・・・<br>身近な人がそれだけ変わってたらやる気起きますよね！<br>いいなぁ。わたしもやってみようかな・・・</div>
<div class="t g" style="left:674px;top:1536px">3時間前 · <a style="color:#6d84b4">いいね！</a> · <svg style="position:static;display:inline;vertical-align:-2px" width="11" height="11" viewBox="0 0 14 13"><use href="#th"/></svg> <a>1</a></div>

<div class="r rr" style="top:1554px;height:52px"></div>
<svg class="av" style="left:634px;top:1558px" viewBox="20 18 150 150"><use href="#a"/></svg>
<div class="t" style="left:674px;top:1559px"><span class="n">Ayumu Mishima</span> 痩せなかったら返金してくれるシステムもある<br>し、すごく親切でいいですよ＾＾</div>
<div class="t g" style="left:674px;top:1589px">3時間前 · <a style="color:#6d84b4">いいね！</a></div>

<div class="r rr" style="top:1607px;height:67px"></div>
<svg class="av" style="left:634px;top:1611px" viewBox="0 0 99 98"><use href="#s"/></svg>
<div class="t" style="left:674px;top:1612px"><span class="n">Shiho Mimura</span> 本当ですか！？<br>わざわざありがとうございます！<br>ちょっと本気で考えてみますね！</div>
<div class="t g" style="left:674px;top:1656px">3時間前 · <a style="color:#6d84b4">いいね！</a></div>

<div class="r rr" style="top:1675px;height:40px"></div>
<svg class="av" style="left:634px;top:1679px" viewBox="0 0 32 32"><rect width="32" height="32" fill="#e6e6e6"/><path d="M2 3l6 5M12 1h10v6H12zM3 12l7 3 4 8-8 6M16 12l12 2-3 8 5 6H14M20 4l6 7M2 20l9 9" stroke="#555" fill="none" stroke-width="1.400"/><path d="M1 8h5M24 24h7M10 18h6" stroke="#222" stroke-width="2"/></svg>
<div class="inp" style="left:671px;top:1680px;width:342px">コメントする...</div>

<!-- 2012 -->
<div class="x" style="left:570px;top:1826px;width:68px;height:30px;background:#a9b5d3;border-radius:3px;color:#fff;text-align:center;font-size:12px;line-height:29px">2012年</div>
<div class="card" style="left:178px;top:1887px;width:411px;height:105px"></div>
<div class="arr" style="left:584px;top:1909px;border-left:0;border-bottom:0"></div>
<div class="dot" style="top:1910px"></div>
<svg style="left:373px;top:1902px" width="22" height="22" viewBox="0 0 22 22"><rect width="22" height="22" fill="#4c69aa"/><text x="9" y="24" font-size="24" font-weight="bold" fill="#fff" font-family="Liberation Sans,sans-serif">f</text></svg>
<div class="t b" style="left:178px;top:1927px;width:411px;text-align:center;font-size:18px;line-height:22px;color:#2b2b2b">Facebookに参加しました</div>
<div class="t" style="left:334px;top:1950px">2012年10月23日</div>
<svg style="left:422px;top:1953px" width="10" height="10"><use href="#gl"/></svg>

<!-- birth -->
<div class="x" style="left:579px;top:2114px;width:50px;height:30px;background:#a9b5d3;border-radius:3px;color:#fff;text-align:center;font-size:13px;line-height:30px">誕生</div>
<div class="dot" style="top:2155px"></div>
<div class="card" style="left:178px;top:2175px;width:851px;height:94px"></div>
<div class="arr" style="left:598px;top:2170px;border-right:0;border-bottom:0"></div>
<svg style="left:594px;top:2191px" width="20" height="30" viewBox="0 0 20 30"><g fill="#4a6ab0"><ellipse cx="10" cy="5.500" rx="5" ry="5.500"/><ellipse cx="10" cy="17" rx="8" ry="8.500"/><ellipse cx="4" cy="24.500" rx="3.600" ry="5"/><ellipse cx="16" cy="24.500" rx="3.600" ry="5"/></g><path d="M5 21.500H15L11 28.500H9Z" fill="#fff"/></svg>
<div class="t b" style="left:178px;top:2225px;width:851px;text-align:center;font-size:18px;line-height:22px;color:#2b2b2b">誕生</div>

<!-- footer -->
<div class="hr" style="left:178px;top:2306px;width:852px;background:#ccc"></div>
<div class="t" style="left:178px;top:2329px"><a>Facebookについて</a></div>
<div class="t" style="left:288px;top:2329px"><a>広告を作成</a></div>
<div class="t" style="left:363px;top:2329px"><a>ページを作成</a></div>
<div class="t" style="left:450px;top:2329px"><a>開発</a></div>
<div class="t" style="left:491px;top:2329px"><a>採用情報</a></div>
<div class="t" style="left:555px;top:2329px"><a>プライバシー</a></div>
<div class="t" style="left:641px;top:2329px"><a>Cookie</a></div>
<div class="t" style="left:693px;top:2329px"><a>規約</a></div>
<div class="t" style="left:735px;top:2319px;line-height:20px"><a>ヘルプ<br>ナビ</a></div>
<div class="t g" style="left:178px;top:2376px">Facebook © 2013 · <a>日本語</a></div>

</body></html>
